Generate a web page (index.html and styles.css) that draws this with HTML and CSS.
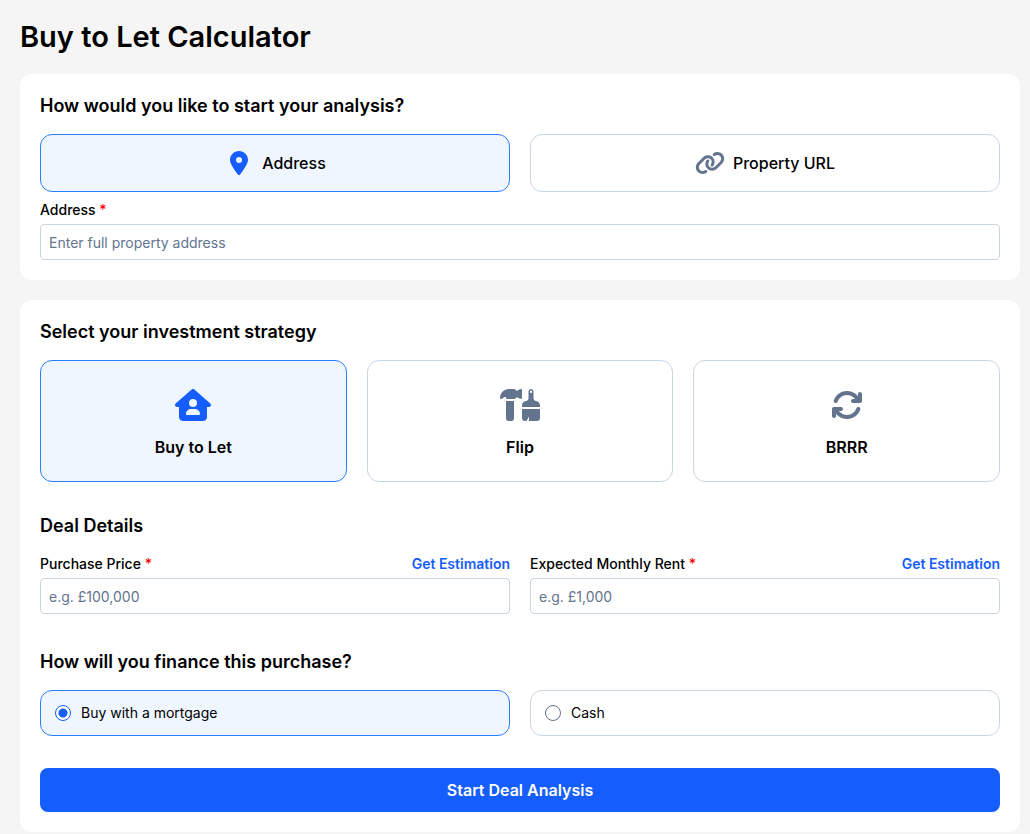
FILE: index.html
```html
<!DOCTYPE html>
<html lang="en">
<head>
    <meta charset="UTF-8">
    <meta name="viewport" content="width=device-width, initial-scale=1.0">
    <title>Buy to Let Calculator</title>
    <link rel="stylesheet" href="styles.css">
</head>
<body>
    <main class="page">
        <h1>Buy to Let Calculator</h1>

        <form id="dealForm">
            <section class="card">
                <h2>How would you like to start your analysis?</h2>
                <div class="row two">
                    <button type="button" class="option source active">
                        <svg class="icon-sm" viewBox="0 0 384 512" aria-hidden="true"><path d="M215.7 499.2C267 435 384 279.4 384 192C384 86 298 0 192 0S0 86 0 192c0 87.4 117 243 168.3 307.2c12.3 15.3 35.1 15.3 47.4 0zM192 128a64 64 0 1 1 0 128 64 64 0 1 1 0-128z"/></svg>
                        Address
                    </button>
                    <button type="button" class="option source">
                        <svg class="icon-sm" viewBox="0 0 640 512" aria-hidden="true"><path d="M579.8 267.7c56.5-56.5 56.5-148 0-204.5c-50-50-128.8-56.5-186.3-15.4l-1.6 1.1c-14.4 10.3-17.7 30.3-7.4 44.6s30.3 17.7 44.6 7.4l1.6-1.1c32.1-22.9 76-19.3 103.8 8.6c31.5 31.5 31.5 82.5 0 114L422.3 334.8c-31.5 31.5-82.5 31.5-114 0c-27.9-27.9-31.5-71.8-8.6-103.8l1.1-1.6c10.3-14.4 6.9-34.4-7.4-44.6s-34.4-6.9-44.6 7.4l-1.1 1.6C206.5 251.2 213 330 263 380c56.5 56.5 148 56.5 204.5 0L579.8 267.7zM60.2 244.3c-56.5 56.5-56.5 148 0 204.5c50 50 128.8 56.5 186.3 15.4l1.6-1.1c14.4-10.3 17.7-30.3 7.4-44.6s-30.3-17.7-44.6-7.4l-1.6 1.1c-32.1 22.9-76 19.3-103.8-8.6C74 372 74 321 105.5 289.5L217.7 177.2c31.5-31.5 82.5-31.5 114 0c27.9 27.9 31.5 71.8 8.6 103.9l-1.1 1.6c-10.3 14.4-6.9 34.4 7.4 44.6s34.4 6.9 44.6-7.4l1.1-1.6C433.5 260.8 427 182 377 132c-56.5-56.5-148-56.5-204.5 0L60.2 244.3z"/></svg>
                        Property URL
                    </button>
                </div>
                <div class="field address">
                    <div class="label-row">
                        <label for="address">Address <span class="required">*</span></label>
                    </div>
                    <input type="text" id="address" name="address" placeholder="Enter full property address">
                </div>
            </section>

            <section class="card">
                <h2>Select your investment strategy</h2>
                <div class="row three">
                    <button type="button" class="option strategy active">
                        <svg class="icon-lg" viewBox="0 0 576 512" aria-hidden="true"><path d="M543.8 287.6c17 0 32-14 32-32.1c1-9-3-17-11-24L309.5 7c-6-5-14-7-21-7s-15 1-22 8L10 231.5c-7 7-10 15-10 24c0 18 14 32.1 32 32.1l32 0 0 160.4c0 35.3 28.7 64 64 64l320.4 0c35.5 0 64.2-28.8 64-64.3l-.7-160.2 32 0zM288 160a64 64 0 1 1 0 128 64 64 0 1 1 0-128zM176 400c0-44.2 35.8-80 80-80l64 0c44.2 0 80 35.8 80 80c0 8.8-7.2 16-16 16l-192 0c-8.8 0-16-7.2-16-16z"/></svg>
                        Buy to Let
                    </button>
                    <button type="button" class="option strategy">
                        <svg class="icon-lg" viewBox="0 0 40 32" aria-hidden="true">
                            <path d="M0 9C.3 3.5 4 0 9 0h5c1.200 0 2 .8 2.500 2L20 .2c1.200-.4 2 .1 2 1.300v7c0 1.200-.8 1.700-2 1.300L16.500 8c-.5 1.400-1.300 2-2.500 2H7.500C6.500 10 6 9.500 6 8.500V8C4.500 8 3.300 8.500 2 9.700 1 10.300 0 10 0 9z"/>
                            <path d="M6 12h8v17.500c0 1.400-1.100 2.500-2.500 2.500h-3C7.100 32 6 30.900 6 29.500z"/>
                            <path fill-rule="evenodd" d="M28.500 2.500C28.500 1.100 29.600 0 31 0s2.500 1.100 2.500 2.500V9c0 1.700 1 2.700 2.500 3 2.400.5 4 2.100 4 4.500V18H22v-1.500c0-2.400 1.600-4 4-4.500 1.500-.3 2.500-1.300 2.500-3zM31 1.500a1.200 1.200 0 1 0 0 2.400 1.200 1.200 0 0 0 0-2.400z"/>
                            <path d="M22 20h18v9c0 1.700-1.300 3-3 3h-8v-4.500L26.500 32H25c-1.700 0-3-1.300-3-3z"/>
                        </svg>
                        Flip
                    </button>
                    <button type="button" class="option strategy">
                        <svg class="icon-lg" viewBox="0 0 512 512" aria-hidden="true"><path d="M105.1 202.6c7.7-21.8 20.2-42.3 37.8-59.8c62.5-62.5 163.8-62.5 226.3 0L386.3 160 352 160c-17.7 0-32 14.3-32 32s14.3 32 32 32l111.9 0c17.7 0 32-14.3 32-32l0-112c0-17.7-14.3-32-32-32s-32 14.3-32 32l0 35.2L414.4 97.6c-87.5-87.5-229.3-87.5-316.8 0C73.2 122 55.6 150.7 44.8 181.4c-5.9 16.7 2.9 34.9 19.5 40.8s34.9-2.9 40.8-19.5zM39 289.3c-5 1.5-9.8 4.2-13.7 8.2c-4 4-6.7 8.8-8.1 14c-.3 1.2-.6 2.5-.8 3.8c-.3 1.7-.4 3.4-.4 5.1L16 432c0 17.7 14.3 32 32 32s32-14.3 32-32l0-35.1 17.6 17.5c87.5 87.4 229.3 87.4 316.7 0c24.4-24.4 42.1-53.1 52.9-83.8c5.9-16.7-2.9-34.9-19.5-40.8s-34.9 2.9-40.8 19.5c-7.7 21.8-20.2 42.3-37.8 59.8c-62.5 62.5-163.8 62.5-226.3 0l-.1-.1L125.6 352l34.4 0c17.7 0 32-14.3 32-32s-14.3-32-32-32L48.4 288c-1.6 0-3.2 .1-4.8 .3s-3.1 .5-4.6 1z"/></svg>
                        BRRR
                    </button>
                </div>

                <h2 class="deal-title">Deal Details</h2>
                <div class="row two">
                    <div class="field">
                        <div class="label-row">
                            <label for="price">Purchase Price <span class="required">*</span></label>
                            <a href="#">Get Estimation</a>
                        </div>
                        <input type="text" id="price" name="price" placeholder="e.g. £100,000">
                    </div>
                    <div class="field">
                        <div class="label-row">
                            <label for="rent">Expected Monthly Rent <span class="required">*</span></label>
                            <a href="#">Get Estimation</a>
                        </div>
                        <input type="text" id="rent" name="rent" placeholder="e.g. £1,000">
                    </div>
                </div>

                <h2 class="finance-title">How will you finance this purchase?</h2>
                <div class="row two">
                    <label class="option finance">
                        <input type="radio" name="finance" value="mortgage" checked>
                        Buy with a mortgage
                    </label>
                    <label class="option finance">
                        <input type="radio" name="finance" value="cash">
                        Cash
                    </label>
                </div>

                <button type="submit" class="submit">Start Deal Analysis</button>
            </section>
        </form>
    </main>

    <script>
        // highlight the clicked option in its own row
        document.querySelectorAll('button.option').forEach(button => {
            button.addEventListener('click', () => {
                button.parentElement.querySelectorAll('.option').forEach(o => o.classList.remove('active'));
                button.classList.add('active');
            });
        });

        document.getElementById('dealForm').addEventListener('submit', event => event.preventDefault());
    </script>
</body>
</html>
```
FILE: styles.css
```css
* {
    margin: 0;
    padding: 0;
    box-sizing: border-box;
}

body {
    font-family: Inter, "Liberation Sans", sans-serif;
    font-size: 14px;
    line-height: 20px;
    color: #000;
    background-color: #f5f5f5;
}

button, input {
    font: inherit;
    color: inherit;
}

.page {
    padding: 16px 10px 2px 20px;
}

h1 {
    font-size: 29px;
    line-height: 42px;
    font-weight: 600;
    margin-bottom: 16px;
}

h2 {
    font-size: 18px;
    line-height: 24px;
    font-weight: 600;
    margin-bottom: 16px;
}

.card {
    padding: 20px;
    background-color: white;
    border-radius: 12px;
}

.card + .card {
    margin-top: 20px;
}

.row {
    display: grid;
    gap: 20px;
}

.two {
    grid-template-columns: 1fr 1fr;
}

.three {
    grid-template-columns: 1fr 1fr 1fr;
}

.option {
    display: flex;
    align-items: center;
    border: 1px solid #cad5e2;
    border-radius: 12px;
    background-color: white;
    cursor: pointer;
}

.option.active, .option:has(input:checked) {
    border-color: #2b7fff;
    background-color: #eff6ff;
}

.option svg {
    fill: #62748e;
}

.option.active svg {
    fill: #155dfc;
}

.source {
    justify-content: center;
    gap: 8px;
    padding: 16px;
    font-size: 16px;
    line-height: 24px;
    font-weight: 500;
}

.icon-sm {
    width: 30px;
    height: 24px;
}

.strategy {
    flex-direction: column;
    gap: 10px;
    padding: 24px 24px 22px;
    font-size: 16px;
    line-height: 24px;
    font-weight: 600;
}

.icon-lg {
    width: 40px;
    height: 32px;
    margin: 4px 0;
}

.address {
    margin-top: 8px;
}

.label-row {
    display: flex;
    justify-content: space-between;
    margin-bottom: 4px;
    font-weight: 500;
}

.required {
    color: red;
}

a {
    color: #155dfc;
    font-weight: 600;
    text-decoration: none;
}

a:hover {
    text-decoration: underline;
}

.field input {
    display: block;
    width: 100%;
    height: 36px;
    padding: 0 8px;
    border: 1px solid #cad5e2;
    border-radius: 4px;
    background-color: white;
}

.field input::placeholder {
    color: #62748e;
}

.deal-title {
    margin-top: 32px;
}

.finance-title {
    margin-top: 36px;
}

.finance {
    gap: 10px;
    padding: 12px 14px;
}

.finance input {
    appearance: none;
    width: 16px;
    height: 16px;
    border: 1px solid #62748e;
    border-radius: 50%;
    background-color: white;
}

.finance input:checked {
    border-color: #155dfc;
    background-image: radial-gradient(circle, #155dfc 4px, transparent 5px);
}

.submit {
    display: block;
    width: 100%;
    margin-top: 32px;
    padding: 10px;
    border: none;
    border-radius: 8px;
    background-color: #155dfc;
    color: white;
    font-size: 16px;
    line-height: 24px;
    font-weight: 600;
    cursor: pointer;
}

.submit:hover {
    background-color: #1447e6;
}
```
